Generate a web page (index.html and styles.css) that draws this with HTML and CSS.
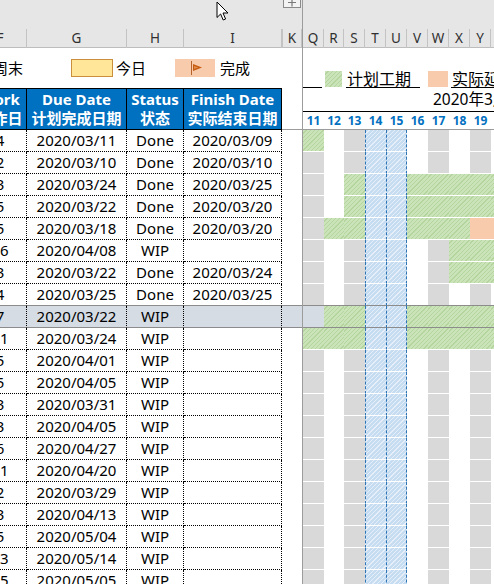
FILE: index.html
```html
<!DOCTYPE html>
<html lang="zh">
<head>
<meta charset="utf-8">
<title>Gantt</title>
<link rel="stylesheet" href="styles.css">
</head>
<body>
<div class="sheet">
  <div class="pane-left">
    <div class="top">
      <span class="outline-btn"><svg width="18" height="8" viewBox="0 0 18 8"><rect x="0.5" y="-4" width="17" height="11.5" fill="#f3f3f3" stroke="#8a8a8a"/><path d="M5 2.5h8M9 -1.5v8" stroke="#7a7a7a" stroke-width="1.2"/></svg></span>
    </div>
    <div class="lrow colhead"><div>F</div><div>G</div><div>H</div><div>I</div><div></div><div>K</div></div>
    <div class="legend-left">
      <span class="lg-text">周末</span>
      <span class="today-box"></span>
      <span class="lg-text lg-today">今日</span>
      <span class="done-box"><svg width="40" height="18" viewBox="0 0 40 18"><path d="M16.5 2v14" stroke="#b5632a" stroke-width="1"/><path d="M18 5l9 3.5-9 3.5z" fill="#c55a11"/><path d="M19 7l4.5 1.5-4.5 1.5z" fill="#e08a4c"/></svg></span>
      <span class="lg-text lg-done">完成</span>
    </div>
    <div class="lrow thead">
      <div class="th"><span>Work</span><span>工作日</span></div>
      <div class="th"><span>Due Date</span><span>计划完成日期</span></div>
      <div class="th"><span>Status</span><span>状态</span></div>
      <div class="th"><span>Finish Date</span><span>实际结束日期</span></div>
      <div class="th-gap"></div>
      <div class="th-gap"></div>
    </div>
    <div class="lrow tr"><div class="td">4</div><div class="td">2020/03/11</div><div class="td">Done</div><div class="td">2020/03/09</div><div class="gap"></div><div class="gap"></div></div>
    <div class="lrow tr"><div class="td">2</div><div class="td">2020/03/10</div><div class="td">Done</div><div class="td">2020/03/10</div><div class="gap"></div><div class="gap"></div></div>
    <div class="lrow tr"><div class="td">3</div><div class="td">2020/03/24</div><div class="td">Done</div><div class="td">2020/03/25</div><div class="gap"></div><div class="gap"></div></div>
    <div class="lrow tr"><div class="td">5</div><div class="td">2020/03/22</div><div class="td">Done</div><div class="td">2020/03/20</div><div class="gap"></div><div class="gap"></div></div>
    <div class="lrow tr"><div class="td">5</div><div class="td">2020/03/18</div><div class="td">Done</div><div class="td">2020/03/20</div><div class="gap"></div><div class="gap"></div></div>
    <div class="lrow tr"><div class="td">16</div><div class="td">2020/04/08</div><div class="td">WIP</div><div class="td"></div><div class="gap"></div><div class="gap"></div></div>
    <div class="lrow tr"><div class="td">3</div><div class="td">2020/03/22</div><div class="td">Done</div><div class="td">2020/03/24</div><div class="gap"></div><div class="gap"></div></div>
    <div class="lrow tr pre-sel"><div class="td">4</div><div class="td">2020/03/25</div><div class="td">Done</div><div class="td">2020/03/25</div><div class="gap"></div><div class="gap"></div></div>
    <div class="lrow tr sel"><div class="td">7</div><div class="td">2020/03/22</div><div class="td">WIP</div><div class="td"></div><div class="gap"></div><div class="gap"></div></div>
    <div class="lrow tr"><div class="td">11</div><div class="td">2020/03/24</div><div class="td">WIP</div><div class="td"></div><div class="gap"></div><div class="gap"></div></div>
    <div class="lrow tr"><div class="td">5</div><div class="td">2020/04/01</div><div class="td">WIP</div><div class="td"></div><div class="gap"></div><div class="gap"></div></div>
    <div class="lrow tr"><div class="td">5</div><div class="td">2020/04/05</div><div class="td">WIP</div><div class="td"></div><div class="gap"></div><div class="gap"></div></div>
    <div class="lrow tr"><div class="td">3</div><div class="td">2020/03/31</div><div class="td">WIP</div><div class="td"></div><div class="gap"></div><div class="gap"></div></div>
    <div class="lrow tr"><div class="td">3</div><div class="td">2020/04/05</div><div class="td">WIP</div><div class="td"></div><div class="gap"></div><div class="gap"></div></div>
    <div class="lrow tr"><div class="td">6</div><div class="td">2020/04/27</div><div class="td">WIP</div><div class="td"></div><div class="gap"></div><div class="gap"></div></div>
    <div class="lrow tr"><div class="td">11</div><div class="td">2020/04/20</div><div class="td">WIP</div><div class="td"></div><div class="gap"></div><div class="gap"></div></div>
    <div class="lrow tr"><div class="td">2</div><div class="td">2020/03/29</div><div class="td">WIP</div><div class="td"></div><div class="gap"></div><div class="gap"></div></div>
    <div class="lrow tr"><div class="td">3</div><div class="td">2020/04/13</div><div class="td">WIP</div><div class="td"></div><div class="gap"></div><div class="gap"></div></div>
    <div class="lrow tr"><div class="td">5</div><div class="td">2020/05/04</div><div class="td">WIP</div><div class="td"></div><div class="gap"></div><div class="gap"></div></div>
    <div class="lrow tr"><div class="td">13</div><div class="td">2020/05/14</div><div class="td">WIP</div><div class="td"></div><div class="gap"></div><div class="gap"></div></div>
    <div class="lrow tr"><div class="td">15</div><div class="td">2020/05/05</div><div class="td">WIP</div><div class="td"></div><div class="gap"></div><div class="gap"></div></div>
  </div>

  <div class="freeze"></div>

  <div class="pane-right">
    <div class="top"></div>
    <div class="rrow colhead"><div>Q</div><div>R</div><div>S</div><div>T</div><div>U</div><div>V</div><div>W</div><div>X</div><div>Y</div><div>Z</div></div>
    <div class="legend-right">
      <span class="lg-blank"></span>
      <span class="plan-box"></span>
      <span class="lg-ul lg-plan">计划工期</span>
      <span class="late-box"></span>
      <span class="lg-ul lg-late">实际延期</span>
    </div>
    <div class="rhead">
      <div class="month">2020年3月</div>
      <div class="rrow days"><div>11</div><div>12</div><div>13</div><div>14</div><div>15</div><div>16</div><div>17</div><div>18</div><div>19</div><div>20</div></div>
    </div>
    <div class="rrow tr"><div class="d p"></div><div class="d"></div><div class="d g"></div><div class="d we"></div><div class="d we we2"></div><div class="d"></div><div class="d g"></div><div class="d"></div><div class="d g"></div><div class="d"></div></div>
    <div class="rrow tr"><div class="d g"></div><div class="d"></div><div class="d g"></div><div class="d we"></div><div class="d we we2"></div><div class="d"></div><div class="d g"></div><div class="d"></div><div class="d g"></div><div class="d"></div></div>
    <div class="rrow tr"><div class="d g"></div><div class="d"></div><div class="d p"></div><div class="d we"></div><div class="d we we2"></div><div class="d p"></div><div class="d p"></div><div class="d p"></div><div class="d p"></div><div class="d p"></div></div>
    <div class="rrow tr"><div class="d g"></div><div class="d"></div><div class="d p"></div><div class="d we"></div><div class="d we we2"></div><div class="d p"></div><div class="d p"></div><div class="d p"></div><div class="d p"></div><div class="d p"></div></div>
    <div class="rrow tr"><div class="d g"></div><div class="d p"></div><div class="d p"></div><div class="d we"></div><div class="d we we2"></div><div class="d p"></div><div class="d p"></div><div class="d p"></div><div class="d a"></div><div class="d a"></div></div>
    <div class="rrow tr"><div class="d g"></div><div class="d"></div><div class="d g"></div><div class="d we"></div><div class="d we we2"></div><div class="d"></div><div class="d g"></div><div class="d p"></div><div class="d p"></div><div class="d p"></div></div>
    <div class="rrow tr"><div class="d g"></div><div class="d"></div><div class="d g"></div><div class="d we"></div><div class="d we we2"></div><div class="d"></div><div class="d g"></div><div class="d p"></div><div class="d p"></div><div class="d p"></div></div>
    <div class="rrow tr pre-sel"><div class="d g"></div><div class="d"></div><div class="d g"></div><div class="d we"></div><div class="d we we2"></div><div class="d"></div><div class="d g"></div><div class="d"></div><div class="d g"></div><div class="d"></div></div>
    <div class="rrow tr sel"><div class="d s"></div><div class="d p"></div><div class="d p"></div><div class="d we"></div><div class="d we we2"></div><div class="d p"></div><div class="d p"></div><div class="d p"></div><div class="d p"></div><div class="d p"></div></div>
    <div class="rrow tr"><div class="d p"></div><div class="d p"></div><div class="d p"></div><div class="d we"></div><div class="d we we2"></div><div class="d p"></div><div class="d p"></div><div class="d p"></div><div class="d p"></div><div class="d p"></div></div>
    <div class="rrow tr"><div class="d g"></div><div class="d"></div><div class="d g"></div><div class="d we"></div><div class="d we we2"></div><div class="d"></div><div class="d g"></div><div class="d"></div><div class="d g"></div><div class="d"></div></div>
    <div class="rrow tr"><div class="d g"></div><div class="d"></div><div class="d g"></div><div class="d we"></div><div class="d we we2"></div><div class="d"></div><div class="d g"></div><div class="d"></div><div class="d g"></div><div class="d"></div></div>
    <div class="rrow tr"><div class="d g"></div><div class="d"></div><div class="d g"></div><div class="d we"></div><div class="d we we2"></div><div class="d"></div><div class="d g"></div><div class="d"></div><div class="d g"></div><div class="d"></div></div>
    <div class="rrow tr"><div class="d g"></div><div class="d"></div><div class="d g"></div><div class="d we"></div><div class="d we we2"></div><div class="d"></div><div class="d g"></div><div class="d"></div><div class="d g"></div><div class="d"></div></div>
    <div class="rrow tr"><div class="d g"></div><div class="d"></div><div class="d g"></div><div class="d we"></div><div class="d we we2"></div><div class="d"></div><div class="d g"></div><div class="d"></div><div class="d g"></div><div class="d"></div></div>
    <div class="rrow tr"><div class="d g"></div><div class="d"></div><div class="d g"></div><div class="d we"></div><div class="d we we2"></div><div class="d"></div><div class="d g"></div><div class="d"></div><div class="d g"></div><div class="d"></div></div>
    <div class="rrow tr"><div class="d g"></div><div class="d"></div><div class="d g"></div><div class="d we"></div><div class="d we we2"></div><div class="d"></div><div class="d g"></div><div class="d"></div><div class="d g"></div><div class="d"></div></div>
    <div class="rrow tr"><div class="d g"></div><div class="d"></div><div class="d g"></div><div class="d we"></div><div class="d we we2"></div><div class="d"></div><div class="d g"></div><div class="d"></div><div class="d g"></div><div class="d"></div></div>
    <div class="rrow tr"><div class="d g"></div><div class="d"></div><div class="d g"></div><div class="d we"></div><div class="d we we2"></div><div class="d"></div><div class="d g"></div><div class="d"></div><div class="d g"></div><div class="d"></div></div>
    <div class="rrow tr"><div class="d g"></div><div class="d"></div><div class="d g"></div><div class="d we"></div><div class="d we we2"></div><div class="d"></div><div class="d g"></div><div class="d"></div><div class="d g"></div><div class="d"></div></div>
    <div class="rrow tr"><div class="d g"></div><div class="d"></div><div class="d g"></div><div class="d we"></div><div class="d we we2"></div><div class="d"></div><div class="d g"></div><div class="d"></div><div class="d g"></div><div class="d"></div></div>
  </div>
</div>
<svg class="cursor" width="14" height="21" viewBox="0 0 14 21"><path d="M1 1 L1 16.5 L4.6 13 L7.2 19 L9.6 18 L7 12 L12 12 Z" fill="#fff" stroke="#000" stroke-width="1" stroke-linejoin="round"/></svg>
</body>
</html>
```
FILE: styles.css
```css
* { box-sizing: border-box; }
html, body { margin: 0; padding: 0; }
body {
  width: 494px;
  height: 584px;
  overflow: hidden;
  position: relative;
  background: #fff;
  color: #000;
  font-family: "Noto Sans", "Noto Sans CJK SC", sans-serif;
}
.sheet { display: flex; height: 584px; }
.pane-left { flex: 0 0 328px; margin-left: -26px; }
.freeze { flex: 0 0 1px; background: #9c9c9c; }
.pane-right { flex: 1 1 auto; min-width: 0; overflow: hidden; }

.top { height: 29px; background: #e6e6e6; display: flex; align-items: flex-start; }
.outline-btn { margin-left: 309px; display: block; height: 8px; line-height: 0; }

.lrow { display: grid; grid-template-columns: 53px 100px 57px 98px 1px 19px; }
.rrow { display: grid; grid-template-columns: 21px 20px 21px 21px 21px 21px 21px 21px 21px 21px; }

.colhead { height: 19px; background: #e6e6e6; border-bottom: 1px solid #bdbdbd; }
.colhead > div {
  border-right: 1px solid #c3c3c3;
  text-align: center;
  font-size: 13.5px;
  line-height: 19px;
  color: #303030;
}

/* legend */
.legend-left { height: 40px; display: flex; align-items: center; padding-left: 19px; }
.lg-text { font-size: 15px; line-height: 20px; white-space: nowrap; }
.today-box { width: 42px; height: 18px; margin-left: 48px; background: #ffe699; border: 1px solid #c98f3b; }
.lg-today { margin-left: 3px; }
.done-box { width: 40px; height: 18px; margin-left: 29px; background: #f8cbad; line-height: 0; }
.lg-done { margin-left: 5px; }

.legend-right { height: 40px; display: flex; align-items: flex-end; white-space: nowrap; }
.lg-blank { flex: 0 0 19px; height: 17px; border-bottom: 1px solid #000; }
.plan-box {
  flex: 0 0 17px; height: 16px; margin-left: 3px; margin-bottom: 1px;
  background: repeating-linear-gradient(135deg, #cae3b9 0 2px, #b4d69e 2px 3px);
}
.lg-ul { height: 17px; font-size: 16px; line-height: 16px; border-bottom: 1px solid #000; }
.lg-plan { flex: 0 0 74px; margin-left: 4px; padding-left: 1px; }
.late-box { flex: 0 0 20px; height: 16px; margin-left: 8px; margin-bottom: 1px; background: #f8cbad; }
.lg-late { flex: 0 0 60px; margin-left: 3px; padding-left: 1px; }

/* table header */
.thead { height: 42px; }
.th {
  background: #0070c0;
  color: #fff;
  font-weight: bold;
  font-size: 15px;
  line-height: 19px;
  border-top: 1px solid #000;
  border-bottom: 1px solid #000;
  border-right: 1px solid #000;
  display: flex;
  flex-direction: column;
  align-items: center;
  justify-content: center;
  white-space: nowrap;
}
.th-gap { border-bottom: 1px solid #9c9c9c; }

.rhead { height: 42px; }
.month {
  height: 24px;
  border-bottom: 1px solid #000;
  padding-left: 130px;
  font-size: 15.5px;
  line-height: 23px;
  white-space: nowrap;
}
.days { height: 18px; border-bottom: 1px solid #9c9c9c; }
.days > div {
  text-align: center;
  font-size: 12px;
  font-weight: bold;
  color: #0070c0;
  line-height: 17px;
}

/* data rows */
.tr { height: 22px; }
.td {
  border-right: 1px dotted #000;
  border-bottom: 1px dotted #000;
  text-align: center;
  font-size: 15px;
  line-height: 21px;
  white-space: nowrap;
}
.d { border-bottom: 1px solid #fff; }
.d.g { background: #d9d9d9; }
.d.s { background: #d6dce4; }
.d.a { background: #f8cbad; }
.d.p { background: repeating-linear-gradient(135deg, #cae3b9 0 2px, #b4d69e 2px 3px); }
.d.we {
  background: repeating-linear-gradient(135deg, #c6dcf1 0 2px, #e6eff9 2px 3px);
  border-left: 1px dashed #2e75b6;
}
.d.we2 { border-right: 1px dashed #2e75b6; }

.sel { background: #d6dce4; }
.sel > .td, .sel > .gap, .sel > .d,
.pre-sel > .td, .pre-sel > .gap, .pre-sel > .d { border-bottom: 1px solid #8c8c8c; }

.cursor { position: absolute; left: 216px; top: 1px; }
```
